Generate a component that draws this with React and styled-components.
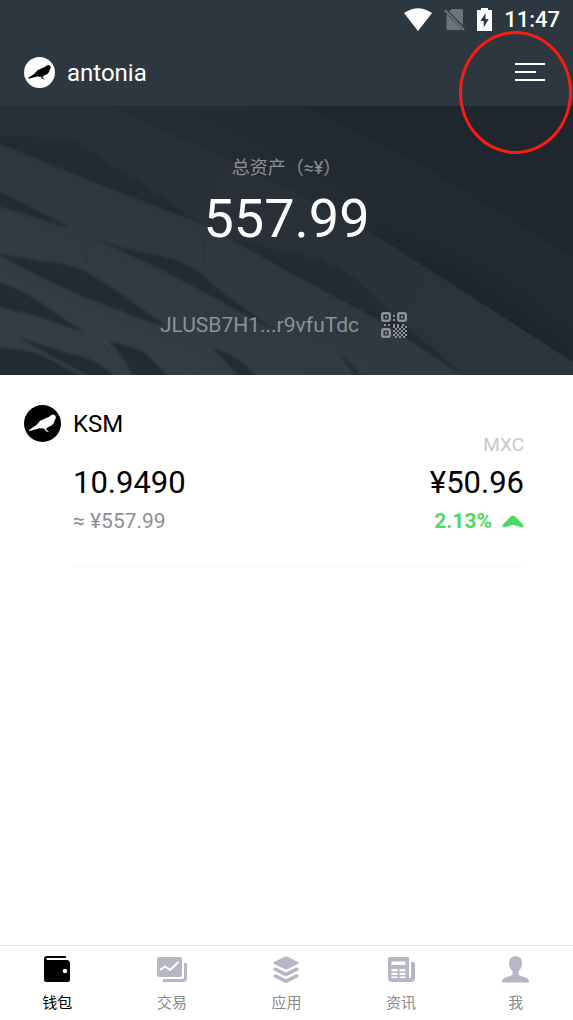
import React from 'react';
import styled, { createGlobalStyle } from 'styled-components';

const tabs = [
    { id: 'wallet', name: '钱包', icon: <WalletIcon /> },
    { id: 'trade', name: '交易', icon: <TradeIcon /> },
    { id: 'apps', name: '应用', icon: <AppsIcon /> },
    { id: 'news', name: '资讯', icon: <NewsIcon /> },
    { id: 'me', name: '我', icon: <MeIcon /> },
];

const App = () => {
    return (
      <Page>
        <GlobalStyle />
        <StatusBar>
            <WifiIcon />
            <NoSimIcon />
            <BatteryIcon />
            <Clock>11:47</Clock>
        </StatusBar>
        <Header>
            <Account href="#account">
                <BirdLogo size="31" background="#fff" color="#000" />
                <AccountName>antonia</AccountName>
            </Account>
            <MenuButton type="button" aria-label="菜单">
                <svg width="30" height="20" viewBox="0 0 30 20" fill="#fff">
                    <rect y="1" width="30" height="2" />
                    <rect y="9" width="21" height="2" />
                    <rect y="17" width="30" height="2" />
                </svg>
                <Marker />
            </MenuButton>
        </Header>
        <Hero>
            <Backdrop />
            <HeroLabel>总资产（≈¥）</HeroLabel>
            <HeroTotal>557.99</HeroTotal>
            <AddressRow>
                JLUSB7H1...r9vfuTdc
                <QrButton type="button" aria-label="二维码"><QrIcon /></QrButton>
            </AddressRow>
        </Hero>
        <Main>
            <Asset>
                <BirdLogo size="37" background="#000" color="#fff" />
                <AssetBody>
                    <Column>
                        <AssetName>KSM</AssetName>
                        <Amount>10.9490</Amount>
                        <Worth>≈ ¥557.99</Worth>
                    </Column>
                    <Column $end>
                        <Market>MXC</Market>
                        <Amount>¥50.96</Amount>
                        <Change>
                            2.13%
                            <svg width="22" height="13" viewBox="0 0 22 13">
                                <path d="M9 1.2Q11 0 13 1.2L21 9.6Q22.4 12.6 19.4 12.2L11 9.8L2.6 12.2Q-.4 12.6 1 9.6Z" fill="#4cd964" />
                            </svg>
                        </Change>
                    </Column>
                </AssetBody>
            </Asset>
        </Main>
        <TabBar>
            {tabs.map((tab, index) => (
                <Tab key={tab.id} href={'#' + tab.id} $active={index === 0}>
                    {tab.icon}
                    <TabName $active={index === 0}>{tab.name}</TabName>
                </Tab>
            ))}
        </TabBar>
      </Page>
    );
}

function BirdLogo({ size, background, color }) {
    return (
        <Logo width={size} height={size} viewBox="0 0 110 110">
            <circle cx="55" cy="55" r="55" fill={background} />
            <path
                fill={color}
                d="M15 74L36 60L48 47L75 35Q82 27 90 29Q94 31 95 38L91 46Q90 56 82 61L71 66L66 70L67 75L73 78L73 80L65 78L60 70L47 69L16 77Z"
            />
        </Logo>
    );
}

function WifiIcon() {
    return (
        <svg width="28" height="23" viewBox="0 0 28 23">
            <path d="M0 5Q14 -4.600 28 5L14 23Z" fill="#fff" />
        </svg>
    );
}

function NoSimIcon() {
    return (
        <svg width="21" height="23" viewBox="0 0 21 23">
            <path d="M7.500 1H17.500Q19 1 19 2.500V17.500L5 3.500ZM2.500 6L18 21.500Q17.500 22 17 22H4Q2.500 22 2.500 20.500Z" fill="#6c7379" />
            <path d="M.8 2L20.200 22" stroke="#6c7379" strokeWidth="1.800" />
        </svg>
    );
}

function BatteryIcon() {
    return (
        <svg width="15" height="23" viewBox="0 0 15 23">
            <path d="M4 0H11V2H15V23H0V2H4Z" fill="#fff" />
            <path d="M8.500 5L3.500 13H6.700V19.500L11.700 11H8.500Z" fill="#2d3740" />
        </svg>
    );
}

function QrIcon() {
    const dots = [];
    for (let row = 0; row < 6; row++) {
        for (let col = 0; col < 7; col++) {
            if ((row + col) % 2 === 0) {
                dots.push(<rect key={row + '-' + col} x={12 + col * 2} y={14 + row * 2} width="2" height="2" />);
            }
        }
    }
    return (
        <svg width="26" height="26" viewBox="0 0 26 26" fill="#8e9195">
            <g fill="none" stroke="#8e9195" strokeWidth="2.400">
                <rect x="1.2" y="1.2" width="7.600" height="7.600" rx="1.500" />
                <rect x="17.2" y="1.2" width="7.600" height="7.600" rx="1.500" />
                <rect x="1.2" y="17.2" width="7.600" height="7.600" rx="1.500" />
            </g>
            <path d="M4 4h2v2h-2zM20 4h2v2h-2zM4 20h2v2h-2zM12 3h2v2h-2zM12 7h2v2h-2zM3 12h2v2h-2zM7 12h2v2h-2zM12 12h2v2h-2zM16 12h2v2h-2zM21 12h2v2h-2z" />
            {dots}
        </svg>
    );
}

function WalletIcon() {
    return (
        <svg width="26" height="27" viewBox="0 0 26 27">
            <path fill="currentColor" fillRule="evenodd" d="M3 0H21Q22 0 22 1V2H3.500Q2.500 2 2.500 3Q2.500 4 3.500 4H23.500Q26 4.500 26 7V23.500Q26 26 23.500 26H2.500Q0 26 0 23.500V3Q0 0 3 0ZM21 12.700a2.300 2.300 0 1 0 0 4.600a2.300 2.300 0 1 0 0 -4.600Z" />
        </svg>
    );
}

function TradeIcon() {
    return (
        <svg width="30" height="27" viewBox="0 0 30 27">
            <rect x="0" y="1" width="25" height="20" rx="2" fill="currentColor" />
            <path d="M3 14L8 10.500L13 14L21.500 6" fill="none" stroke="#fff" strokeWidth="2" />
            <path d="M28.500 7V22Q28.500 24.500 26 24.500H6" fill="none" stroke="currentColor" strokeWidth="3" />
        </svg>
    );
}

function AppsIcon() {
    return (
        <svg width="26" height="27" viewBox="0 0 26 27" fill="currentColor">
            <path d="M11.500 .8Q13 0 14.500 .8L25 6Q26.500 7 25 8L14.500 13Q13 13.700 11.500 13L1 8Q-.5 7 1 6Z" />
            <path d="M1 12Q2 11 3.500 11.800L13 16.500L22.500 11.800Q24 11 25 12Q26.500 13.500 25 14.500L14 20Q13 20.500 12 20L1 14.500Q-.5 13.500 1 12Z" />
            <path d="M1 18.700Q2 17.700 3.500 18.500L13 23.200L22.500 18.500Q24 17.700 25 18.700Q26.500 20.200 25 21.200L14 26.700Q13 27.200 12 26.700L1 21.200Q-.5 20.200 1 18.700Z" />
        </svg>
    );
}

function NewsIcon() {
    return (
        <svg width="27" height="27" viewBox="0 0 27 27">
            <path fill="currentColor" d="M1.500 1H20Q21 1 21 2V22H23V6H25.500Q27 6 27 7.500V22Q27 26 23 26H4Q0 26 0 22V2.500Q0 1 1.500 1Z" />
            <path fill="#fff" d="M3.500 5.500H17.500V9H3.500ZM3.500 13H9.500V15.500H3.500ZM11.500 13H17.500V15.500H11.500ZM3.500 17H9.500V19H3.500ZM11.500 17H17.500V19H11.500ZM3.500 20.500H9.500V22H3.500ZM11.500 20.500H17.500V22H11.500Z" />
        </svg>
    );
}

function MeIcon() {
    return (
        <svg width="27" height="27" viewBox="0 0 27 27">
            <path fill="currentColor" d="M13.500 0Q20 .5 20 7Q20 12 16.500 15V18.500Q18 20 22 21Q27 22 27 25.500V26.500H0V25.500Q0 22 5 21Q9 20 10.500 18.500V15Q7 12 7 7Q7 .5 13.500 0Z" />
        </svg>
    );
}

// overlapping roof panels behind the total
function Backdrop() {
    return (
        <BackdropSvg viewBox="0 0 573 269" preserveAspectRatio="none" aria-hidden="true">
            <defs>
                <linearGradient id="panel" gradientUnits="userSpaceOnUse" x1="190" y1="269" x2="300" y2="0">
                    <stop offset="0" stopColor="#343d44" />
                    <stop offset="0.5" stopColor="#2e363e" />
                    <stop offset="1" stopColor="#262d34" />
                </linearGradient>
                <linearGradient id="upper" gradientUnits="userSpaceOnUse" x1="340" y1="110" x2="400" y2="0">
                    <stop offset="0" stopColor="#242c33" />
                    <stop offset="1" stopColor="#21272e" />
                </linearGradient>
                <linearGradient id="middle" gradientUnits="userSpaceOnUse" x1="60" y1="0" x2="573" y2="260">
                    <stop offset="0" stopColor="#282f36" />
                    <stop offset="0.5" stopColor="#283038" />
                    <stop offset="1" stopColor="#2c343c" />
                </linearGradient>
                <filter id="soft" x="-5%" y="-5%" width="110%" height="110%">
                    <feGaussianBlur stdDeviation="1" />
                </filter>
                <filter id="softer" x="-10%" y="-20%" width="120%" height="140%">
                    <feGaussianBlur stdDeviation="8" />
                </filter>
            </defs>
            <rect width="573" height="269" fill="url(#panel)" />
            <path d="M0 0H110L217 49L290 84L383 134L573 256V269H463L383 216L290 166L193 114L103 79L0 37Z" fill="url(#middle)" />
            <path d="M110 0H573V256L383 134L290 84L217 49Z" fill="url(#upper)" />
            <path d="M306 0H573V151L436 67Z" fill="#20262e" />
            <clipPath id="upperClip">
                <path d="M110 0H573V256L383 134L290 84L217 49Z" />
            </clipPath>
            <g clipPath="url(#upperClip)">
                <path d="M370 115L466 150L530 190L590 240V290L383 150Z" fill="#1d262e" filter="url(#softer)" />
            </g>
            <g fill="#202931" filter="url(#soft)">
                <path d="M-5 35L-5 31Q30 29 70 35Q88 43 103 55Q140 76 193 114L103 79Z" />
                <path d="M235 132Q260 143 290 148Q335 155 355 174L393 211L463 269L383 216L290 166Z" />
                <path d="M-5 84L23 97L70 122L-5 99Z" />
                <path d="M97 133Q125 145 160 150Q195 158 210 177Q240 200 275 224L243 207L167 166Z" />
                <path d="M-5 147Q25 154 50 156Q78 160 90 169Q115 183 140 202L167 221L140 212L87 192L43 172Z" />
                <path d="M-5 175Q25 185 40 197L83 226L40 211L-5 199Z" />
                <path d="M110 236Q135 240 147 249L173 275H136Q124 250 110 236Z" />
                <path d="M213 242Q240 250 260 275H244Z" />
                <path d="M20 232L70 248Q102 254 118 275H98L50 249Z" />
                <path d="M-5 242Q27 242 45 251L90 275H-5Z" />
                <path d="M341 250Q352 258 366 275H360Z" />
            </g>
            <g stroke="#242c33" strokeWidth="1" fill="none" opacity="0.350">
                <path d="M81 128L89 166" />
                <path d="M204 129V164" />
                <path d="M353 134L345 171" />
                <path d="M541 143L529 171" />
                <path d="M101 234L113 255" />
                <path d="M325 251V269" />
            </g>
        </BackdropSvg>
    );
}

const GlobalStyle = createGlobalStyle`
    * {
        box-sizing: border-box;
    }
    body {
        margin: 0;
        background: #fff;
        font-family: Roboto, 'Noto Sans CJK SC', sans-serif;
        color: #000;
    }
    svg {
        display: block;
    }
`;

const Page = styled.div`
    display: flex;
    flex-direction: column;
    min-height: 100vh;
`;

const StatusBar = styled.div`
    display: flex;
    align-items: center;
    justify-content: flex-end;
    gap: 12px;
    height: 38px;
    padding-right: 13px;
    background: #2d3740;
`;

const Clock = styled.time`
    padding-top: 2px;
    font-size: 22px;
    font-weight: 500;
    line-height: 24px;
    color: #fff;
`;

const Header = styled.header`
    display: flex;
    align-items: center;
    justify-content: space-between;
    height: 68px;
    padding: 0 28px 0 24px;
    background: #2d3740;
`;

const Account = styled.a`
    display: flex;
    align-items: center;
    gap: 12px;
    color: #fff;
    text-decoration: none;
`;

const AccountName = styled.span`
    padding-top: 2px;
    font-size: 24px;
    line-height: 28px;
`;

const Logo = styled.svg`
    flex: none;
`;

const MenuButton = styled.button`
    position: relative;
    padding: 0;
    border: 0;
    background: none;
    cursor: pointer;
`;

/* hand-drawn style highlight laid over the menu button */
const Marker = styled.span`
    position: absolute;
    z-index: 2;
    top: -31px;
    right: -27px;
    width: 113px;
    height: 123px;
    border: 3px solid #fc1c10;
    border-radius: 50%;
    pointer-events: none;
`;

const Hero = styled.section`
    position: relative;
    display: flex;
    flex-direction: column;
    align-items: center;
    padding: 48px 24px 36px;
    background: #20272e;
`;

const BackdropSvg = styled.svg`
    position: absolute;
    inset: 0;
    width: 100%;
    height: 100%;
`;

const HeroLabel = styled.div`
    position: relative;
    font-size: 18px;
    line-height: 28px;
    color: #8e9195;
`;

const HeroTotal = styled.div`
    position: relative;
    font-size: 54px;
    line-height: 74px;
    color: #fff;
`;

const AddressRow = styled.div`
    position: relative;
    display: flex;
    align-items: center;
    gap: 22px;
    margin-top: 55px;
    padding-right: 6px;
    font-size: 21px;
    line-height: 28px;
    color: #8e9195;
`;

const QrButton = styled.button`
    padding: 0;
    border: 0;
    background: none;
    cursor: pointer;
`;

const Main = styled.main`
    flex: 1;
    padding: 30px 49px 0 24px;
`;

const Asset = styled.article`
    display: flex;
    align-items: flex-start;
    gap: 12px;
`;

const AssetBody = styled.div`
    display: flex;
    flex: 1;
    justify-content: space-between;
    padding-bottom: 27px;
    border-bottom: 1px solid #f5f5f5;
`;

const Column = styled.div`
    display: flex;
    flex-direction: column;
    align-items: ${props => props.$end ? 'flex-end' : 'flex-start'};
    justify-content: flex-end;
`;

const AssetName = styled.h2`
    margin: 0;
    padding-bottom: 20px;
    font-size: 24px;
    font-weight: 400;
    line-height: 38px;
`;

const Amount = styled.div`
    font-size: 31px;
    line-height: 40px;
`;

const Worth = styled.div`
    font-size: 21px;
    line-height: 36px;
    color: #8e8e93;
`;

const Market = styled.div`
    padding-bottom: 4px;
    font-size: 19px;
    line-height: 28px;
    color: #c7c7cc;
`;

const Change = styled.div`
    display: flex;
    align-items: center;
    gap: 10px;
    font-size: 21px;
    font-weight: 700;
    line-height: 36px;
    color: #4cd964;
`;

const TabBar = styled.nav`
    display: flex;
    height: 75px;
    border-top: 1px solid #e2e2e4;
    background: #fff;
`;

const Tab = styled.a`
    display: flex;
    flex: 1;
    flex-direction: column;
    align-items: center;
    gap: 8px;
    padding-top: 10px;
    color: ${props => props.$active ? '#000' : '#b5b8c4'};
    text-decoration: none;
`;

const TabName = styled.span`
    font-size: 15px;
    line-height: 24px;
    color: ${props => props.$active ? '#000' : '#8a8a8a'};
`;

export default App
